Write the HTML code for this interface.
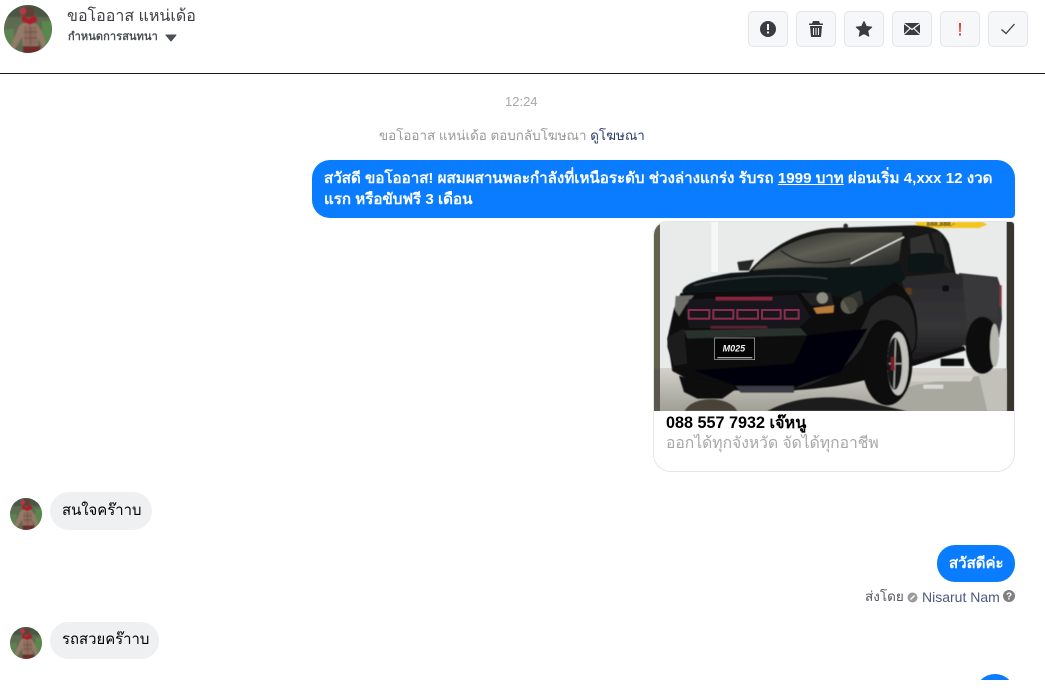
<!DOCTYPE html>
<html lang="th">
<head>
<meta charset="utf-8">
<style>
html,body{margin:0;padding:0;background:#fff}
body{position:relative;width:1045px;height:688px;overflow:hidden;font-family:"Liberation Sans","Noto Sans CJK SC",sans-serif;color:#000}
.a{position:absolute;white-space:nowrap}
.btn{position:absolute;top:11px;width:38px;height:34px;border:1px solid #e3e5e8;border-radius:5px;background:#f6f7f9}
.btn svg{position:absolute;left:0;top:-1px;width:38px;height:34px}
.bubble{position:absolute;box-sizing:border-box;white-space:nowrap}
.blue{background:#0a7cff;color:#fff;font-weight:700;font-size:15.130px}
.grey{background:#eff0f1;color:#000;font-size:14.900px}
</style>
</head>
<body>
<svg width="0" height="0" style="position:absolute">
<defs>
<clipPath id="c"><circle cx="24" cy="24" r="24"/></clipPath>
<filter id="b1"><feGaussianBlur stdDeviation=".7"/></filter>
<filter id="b2"><feGaussianBlur stdDeviation="1.5"/></filter>
<g id="av">
<g clip-path="url(#c)">
<rect width="48" height="48" fill="#5d6b50"/>
<g filter="url(#b1)">
<rect x="0" y="0" width="48" height="12" fill="#4a5844"/>
<rect x="0" y="24" width="10" height="24" fill="#5f8252"/>
<rect x="38" y="16" width="10" height="32" fill="#5a874e"/>
<path d="M7 42 11 31 15 21 18 18 33 19 37 25 41 36 43 43 39 44 34 33 34 42 19 42 18 32 11 44Z" fill="#957a69"/>
<path d="M20 21h13v19H20z" fill="#8e6d5e"/>
<path d="M26.500 21v19M20 27h13M20 33h13" stroke="#6e4f45" stroke-width="1"/>
<path d="M21 2h9v10h-9z" fill="#5f4036"/>
<path d="M18 9 24 14 32 10 33 16 26 20 18 16Z" fill="#ad1c29"/>
<circle cx="19" cy="6" r="3" fill="#c92e45"/>
<path d="M19 41h17v7H19z" fill="#6f2c2c"/>
</g>
</g>
</g>
</defs>
</svg>

<!-- Header -->
<svg class="a" style="left:4px;top:5px" width="48" height="48" viewBox="0 0 48 48"><use href="#av"/></svg>
<div class="a" style="left:67px;top:7px;font-size:16px;line-height:20px;color:#3b3f45">ขอโออาส แหน่เด้อ</div>
<div class="a" style="left:68px;top:30px;font-size:11px;letter-spacing:.1px;line-height:15px;font-weight:700;color:#4b4f56">กำหนดการสนทนา</div>
<svg class="a" style="left:165px;top:34px" width="12" height="8" viewBox="0 0 12 8"><path d="M1 1h10L6 7Z" fill="#4b4f56" stroke="#4b4f56" stroke-linejoin="round"/></svg>

<div class="btn" style="left:748px"><svg viewBox="0 0 38 34"><circle cx="19" cy="18" r="8" fill="#393c40"/><rect x="18" y="13" width="2" height="6" fill="#f6f7f9"/><rect x="18" y="20.500" width="2" height="2" fill="#f6f7f9"/></svg></div>
<div class="btn" style="left:796px"><svg viewBox="0 0 38 34"><path d="M12 12.500h14v1.500H12zM16 10h6l1 2.500h-8z" fill="#393c40"/><path d="M13 15h12l-1 11H14z" fill="#393c40"/><path d="M16.500 17v7M19 17v7M21.500 17v7" stroke="#f6f7f9" stroke-width="1"/></svg></div>
<div class="btn" style="left:844px"><svg viewBox="0 0 38 34"><path d="M19 10.500l2.300 5 5.400.6-4 3.700 1.100 5.400L19 22.500l-4.800 2.700 1.100-5.400-4-3.700 5.400-.6Z" fill="#393c40" stroke="#393c40" stroke-linejoin="round"/></svg></div>
<div class="btn" style="left:892px"><svg viewBox="0 0 38 34"><rect x="11" y="12" width="16" height="12" fill="#393c40"/><path d="M11 12.500 19 18.500 27 12.500M11 23.500 17 17.500M27 23.500 21 17.500" fill="none" stroke="#f6f7f9" stroke-width="1.200"/></svg></div>
<div class="btn" style="left:940px"><svg viewBox="0 0 38 34"><path d="M18 12h2l-.4 9h-1.200z" fill="#d8362a"/><rect x="18" y="22.500" width="2" height="2" fill="#d8362a"/></svg></div>
<div class="btn" style="left:988px"><svg viewBox="0 0 38 34"><path d="M12.500 18.500 17 22.500 25.500 13" fill="none" stroke="#393c40" stroke-width="1.300"/></svg></div>

<div class="a" style="left:0;top:73px;width:1045px;height:1px;background:#1c1e21"></div>

<!-- Thread -->
<div class="a" style="left:505px;top:94px;font-size:13px;line-height:15px;color:#a8a8a8">12:24</div>
<div class="a" style="left:379px;top:127px;font-size:13.400px;line-height:18px;color:#9a9a9a">ขอโออาส แหน่เด้อ ตอบกลับโฆษณา <span style="color:#2f3f6c">ดูโฆษณา</span></div>

<div class="bubble blue" style="left:312px;top:160px;width:703px;height:58px;border-radius:18px 18px 4px 18px;padding:8px 12px;line-height:21px">สวัสดี ขอโออาส! ผสมผสานพละกำลังที่เหนือระดับ ช่วงล่างแกร่ง รับรถ <span style="text-decoration:underline">1999 บาท</span> ผ่อนเริ่ม 4,xxx 12 งวด<br>แรก หรือขับฟรี 3 เดือน</div>

<!-- Ad card -->
<div class="a" style="left:653px;top:221px;width:360px;height:249px;border:1px solid #e4e6e8;border-radius:14px 4px 18px 18px;overflow:hidden;background:#fff">
<svg style="position:absolute;left:0;top:0;display:block" width="360" height="189" viewBox="0 0 1080 567">
<defs>
<linearGradient id="fl" x1="0" y1="0" x2="0" y2="1"><stop offset="0" stop-color="#d3d1c9"/><stop offset="1" stop-color="#a09f96"/></linearGradient>
<linearGradient id="gl" x1="0" y1="0" x2="1" y2="1"><stop offset="0" stop-color="#1d2022"/><stop offset=".45" stop-color="#5e5e53"/><stop offset="1" stop-color="#1c1e1f"/></linearGradient>
<linearGradient id="dr" x1="0" y1="0" x2="0" y2="1"><stop offset="0" stop-color="#29292b"/><stop offset=".6" stop-color="#363537"/><stop offset="1" stop-color="#161617"/></linearGradient>
</defs>
<rect width="1080" height="567" fill="#e9ebeb"/>
<rect x="172" y="0" width="20" height="150" fill="#f6f7f7"/>
<rect x="0" y="0" width="18" height="567" fill="#65614f"/>
<rect x="0" y="440" width="18" height="127" fill="#5b574e"/>
<rect x="1058" y="0" width="22" height="567" fill="#38352f"/>
<rect x="18" y="438" width="1040" height="129" fill="url(#fl)"/>
<g filter="url(#b2)">
<path d="M780 490C880 470 980 470 1058 440V567H560Z" fill="#a9a89f"/>
<path d="M970 440 1058 445V567H1000Z" fill="#c2c1b9"/>
<path d="M92 567C115 520 225 520 250 567Z" fill="#4a4339"/>
<path d="M340 567C430 520 540 520 620 535L760 567Z" fill="#1d1c1a"/>
<rect x="808" y="488" width="60" height="12" fill="#dadad4"/>
<path d="M770 460H960L950 478H770Z" fill="#d2d1c9"/>
<!-- yellow tag -->
<path d="M783 0H985L1000 8 975 18H835L790 12Z" fill="#f2c61f"/>
<text x="818" y="12" font-size="20" font-weight="700" font-family="Liberation Sans" fill="#1c1c1c">888,888.-</text>
<!-- bed -->
<path d="M915 153 1030 165 1040 195 1044 290 1035 345 1000 365 920 372Z" fill="#343436"/>
<rect x="1036" y="190" width="7" height="65" fill="#7c3a38"/>
<!-- cab -->
<path d="M285 148C350 75 430 28 530 18L780 10C835 10 865 22 885 65L905 155 925 380 780 430 300 300Z" fill="#141416"/>
<!-- windshield -->
<path d="M296 145C350 85 440 40 540 32H745L735 115 680 148C560 132 400 132 296 145Z" fill="url(#gl)"/>
<path d="M590 125 750 45" stroke="#e8e8e8" stroke-width="4"/>
<path d="M380 85C430 125 490 132 590 110" stroke="#17191a" stroke-width="4" fill="none"/>
<circle cx="575" cy="12" r="7" fill="#2c2c2e"/>
<!-- side windows -->
<path d="M768 50 822 35 845 105 770 100Z" fill="#303032"/>
<path d="M832 32 860 30 892 148 852 105Z" fill="#212123"/>
<!-- door -->
<path d="M740 165 895 152 925 160 940 355 910 385 770 425 780 300Z" fill="url(#dr)"/>
<path d="M925 160 1020 170 1035 195 1030 290 990 280 965 340 945 365Z" fill="#39393b"/>
<!-- mirror -->
<path d="M762 98C790 90 850 92 868 98 875 120 870 145 852 150 810 155 780 155 760 148Z" fill="#101617"/>
<path d="M250 120 300 113 285 146H255Z" fill="#252525"/>
<rect x="865" y="190" width="20" height="18" rx="5" fill="#111113"/>
<rect x="755" y="198" width="18" height="20" fill="#5a3e1c"/>
<!-- hood -->
<path d="M85 212C85 190 120 172 230 153 400 142 620 135 740 125L755 170 650 245C500 195 300 212 100 215Z" fill="#111314"/>
<path d="M120 190C240 160 420 155 520 170" stroke="#3e4040" stroke-width="4" fill="none"/>
<!-- front body -->
<path d="M80 213 450 205 640 240 720 180C785 215 800 300 785 380 740 450 640 490 420 505H240L120 482 55 447 40 350 60 260Z" fill="#08090a"/>
<!-- fender -->
<path d="M650 255C720 190 775 225 782 300 790 345 780 395 768 390 760 320 720 285 680 295 650 305 640 345 620 380 580 440 500 485 420 500 530 440 610 370 650 255Z" fill="#252528"/>
<!-- headlights -->
<path d="M440 213 530 212 540 250 470 250Z" fill="#222"/>
<circle cx="505" cy="228" r="17" fill="#8c8c80"/>
<circle cx="585" cy="250" r="25" fill="#5f5f53"/>
<path d="M565 230 620 205 628 245 590 275Z" fill="#3a3a36" opacity=".7"/>
<path d="M478 258 540 250 538 272 488 275Z" fill="#b97b3b"/>
<path d="M65 222 120 220 95 250 75 283 62 262Z" fill="#6c6c68"/>
<!-- grille -->
<path d="M105 232 430 218 470 285 430 322 105 318 95 270Z" fill="#17181a"/>
<rect x="185" y="225" width="170" height="10" fill="#8a2640"/>
<rect x="170" y="312" width="170" height="8" fill="#5b2436"/>
</g>
<g fill="none" stroke="#8c2f4b" stroke-width="6" filter="url(#b1)">
<rect x="104" y="264" width="62" height="26"/><rect x="178" y="264" width="60" height="26"/><rect x="250" y="264" width="62" height="26"/><rect x="324" y="264" width="56" height="26"/><rect x="392" y="264" width="42" height="26"/>
</g>
<g filter="url(#b2)">
<!-- bumper -->
<path d="M90 325 440 318 460 340 100 350Z" fill="#2b312f"/>
<path d="M42 345 90 318 100 425 60 432 40 375Z" fill="#1c1f1f"/>
<path d="M120 445 420 425 460 340 640 320 560 450 420 495 240 490Z" fill="#060608"/>
<!-- tyres -->
<path d="M75 462 240 490 240 505 205 530H130L90 510Z" fill="#0c0c0c"/>
<path d="M245 492H420V512H260Z" fill="#3a3b44"/>
<ellipse cx="700" cy="425" rx="75" ry="125" fill="#090909"/>
<ellipse cx="732" cy="425" rx="32" ry="95" fill="#c0c0bc"/>
<ellipse cx="722" cy="425" rx="22" ry="78" fill="#141414"/>
<path d="M725 350 720 500M705 425H745" stroke="#a8a8a4" stroke-width="4"/>
<rect x="710" y="405" width="12" height="40" fill="#7a1f22"/>
<ellipse cx="985" cy="370" rx="50" ry="85" fill="#0c0c0c"/>
<ellipse cx="1022" cy="370" rx="14" ry="65" fill="#b6b6b1"/>
<path d="M775 432 935 385 930 372 770 420Z" fill="#0a0a0b"/>
<rect x="860" y="410" width="70" height="22" fill="#0a0a0b"/>
</g>
<!-- plate -->
<rect x="182" y="348" width="120" height="65" fill="#050505" stroke="#bbb" stroke-width="2"/>
<text x="206" y="388" font-size="27" font-weight="700" font-style="italic" font-family="Liberation Sans" fill="#f4f4f4">M025</text>
<rect x="190" y="405" width="105" height="4" fill="#a8a8a8"/>
</svg>
<div class="a" style="left:12px;top:190px;font-size:16.200px;line-height:22px;font-weight:700;color:#000">088 557 7932 เจ๊หนู</div>
<div class="a" style="left:12px;top:211px;font-size:15.650px;line-height:22px;color:#a7a7a7">ออกได้ทุกจังหวัด จัดได้ทุกอาชีพ</div>
</div>

<!-- Replies -->
<svg class="a" style="left:10px;top:498px" width="32" height="32" viewBox="0 0 48 48"><use href="#av"/></svg>
<div class="bubble grey" style="left:50px;top:492px;width:102px;height:38px;border-radius:19px;padding:8px 12px;line-height:22px">สนใจคร๊าาบ</div>

<div class="bubble blue" style="left:937px;top:545px;width:78px;height:37px;border-radius:18px;padding:8px 12px;line-height:21px;font-size:15px">สวัสดีค่ะ</div>

<div class="a" style="left:865px;top:589px;font-size:13.500px;line-height:16px;color:#55585e">ส่งโดย</div>
<svg class="a" style="left:907px;top:592px" width="11" height="11" viewBox="0 0 11 11"><circle cx="5.500" cy="5.500" r="5" fill="#9a9b9d"/><path d="M3.500 7.500 7.500 3.500" stroke="#fff" stroke-width="1.400"/></svg>
<div class="a" style="left:922px;top:589px;font-size:14px;line-height:16px;color:#4d5a80">Nisarut Nam</div>
<svg class="a" style="left:1003px;top:590px" width="12" height="12" viewBox="0 0 12 12"><circle cx="6" cy="6" r="6" fill="#7e8083"/><text x="6" y="9.500" font-size="10" font-weight="700" text-anchor="middle" font-family="Liberation Sans" fill="#fff">?</text></svg>

<svg class="a" style="left:10px;top:627px" width="32" height="32" viewBox="0 0 48 48"><use href="#av"/></svg>
<div class="bubble grey" style="left:50px;top:622px;width:109px;height:37px;border-radius:18px;padding:8px 12px;line-height:21px">รถสวยคร๊าาบ</div>

<div class="a" style="left:975px;top:674px;width:40px;height:6px;overflow:hidden"><div style="width:40px;height:40px;border-radius:20px;background:#0a7cff"></div></div>
</body>
</html>
